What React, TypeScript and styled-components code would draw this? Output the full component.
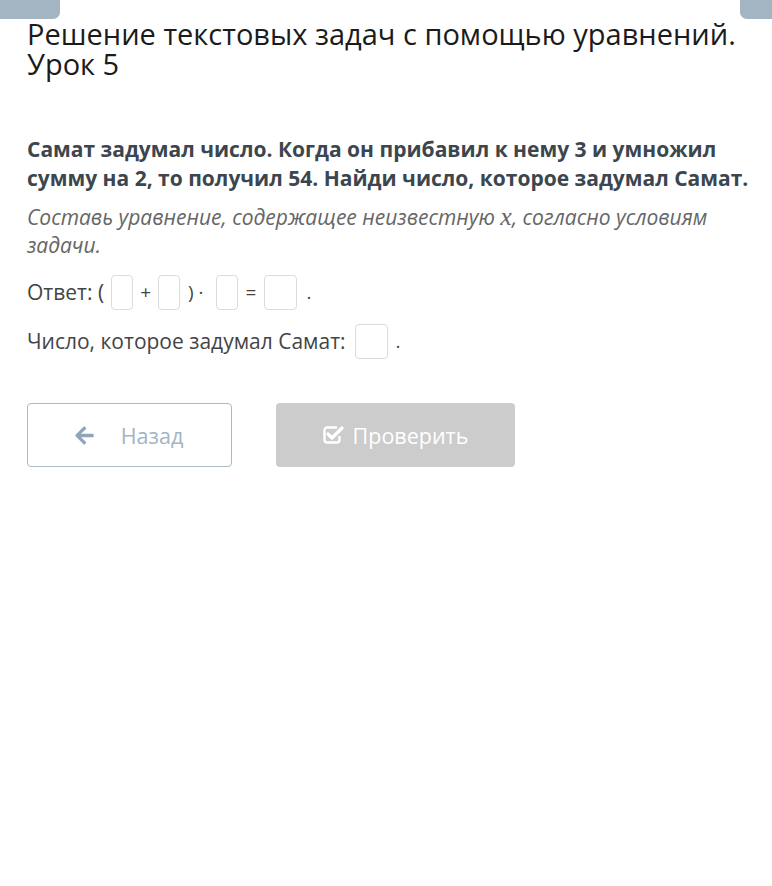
import React from "react";
import styled, { createGlobalStyle } from "styled-components";
import { FaArrowLeft } from "react-icons/fa";

const GlobalStyle = createGlobalStyle`
  html, body {
    margin: 0;
    padding: 0;
    background: #fff;
  }
  body {
    font-family: "Open Sans", "Liberation Sans", sans-serif;
  }
`;

const Page = styled.div`
  width: 772px;
  min-height: 886px;
  background: #fff;
`;

const TopBar = styled.div`
  display: flex;
  justify-content: space-between;
  height: 19px;
`;

const Tab = styled.div<{ $width: number; $side: "left" | "right" }>`
  width: ${(p) => p.$width}px;
  height: 19px;
  background: #a3b4c3;
  border-bottom-${(p) => (p.$side === "left" ? "right" : "left")}-radius: 7px;
`;

const Content = styled.div`
  padding: 0 6px 0 27px;
`;

const Title = styled.h1`
  margin: 0;
  font-size: 29px;
  line-height: 30px;
  font-weight: 400;
  color: #1b1b1b;
`;

const Question = styled.p`
  margin: 56px 0 0;
  font-size: 21px;
  line-height: 29px;
  font-weight: 700;
  color: #3c464e;
`;

const Hint = styled.p`
  margin: 10px 0 0;
  font-size: 21px;
  line-height: 28px;
  font-style: italic;
  color: #666;
`;

const Var = styled.span`
  font-family: "Liberation Serif", "DejaVu Serif", serif;
  font-style: italic;
  font-size: 26px;
  line-height: 0;
`;

const AnswerRow = styled.div<{ $top: number }>`
  display: flex;
  align-items: center;
  margin-top: ${(p) => p.$top}px;
  font-size: 21px;
  color: #444;
  height: 36px;
`;

const Sym = styled.span<{ $l?: number; $r?: number }>`
  margin: 0 ${(p) => p.$r ?? 7}px 0 ${(p) => p.$l ?? 7}px;
  font-size: 19px;
`;

const Box = styled.span<{ $w: number }>`
  display: inline-block;
  width: ${(p) => p.$w}px;
  height: 35px;
  box-sizing: border-box;
  border: 1px solid #dcdcdc;
  border-radius: 4px;
  background: #fff;
`;

const Buttons = styled.div`
  display: flex;
  gap: 44px;
  margin-top: 44px;
`;

const Button = styled.button<{ $variant: "back" | "check" }>`
  display: flex;
  align-items: center;
  justify-content: center;
  height: 64px;
  box-sizing: border-box;
  border-radius: 4px;
  font-family: inherit;
  font-size: 21.5px;
  padding: 0;
  ${(p) =>
    p.$variant === "back"
      ? `
    width: 205px;
    background: #fff;
    border: 1px solid #a8bcc8;
    color: #a3b4c3;
    gap: 26px;
    padding-right: 2px;
  `
      : `
    width: 239px;
    background: #cccccc;
    border: none;
    color: #fff;
    gap: 8px;
  `}
`;

function CheckSquare() {
  return (
    <svg width="22" height="20" viewBox="0 0 22 20">
      <path
        d="M14 2.5 H4 A2.5 2.5 0 0 0 1.5 5 V15 A2.5 2.5 0 0 0 4 17.5 H14 A2.5 2.5 0 0 0 16.5 15 V11"
        fill="none"
        stroke="#fff"
        strokeWidth="2.4"
      />
      <path
        d="M5 9 L9 13 L19 3"
        fill="none"
        stroke="#fff"
        strokeWidth="3.2"
        strokeLinecap="round"
        strokeLinejoin="round"
      />
    </svg>
  );
}

export default function App() {
  return (
    <Page>
      <GlobalStyle />
      <TopBar>
        <Tab $width={60} $side="left" />
        <Tab $width={32} $side="right" />
      </TopBar>
      <Content>
        <Title>
          Решение текстовых задач с помощью уравнений.
          <br />
          Урок 5
        </Title>
        <Question>
          Самат задумал число. Когда он прибавил к нему 3 и умножил
          <br />
          сумму на 2, то получил 54. Найди число, которое задумал Самат.
        </Question>
        <Hint>
          Составь уравнение, содержащее неизвестную <Var>x</Var>, согласно
          условиям задачи.
        </Hint>
        <AnswerRow $top={15}>
          <span>Ответ: (</span>
          <Sym $l={0} $r={7} />
          <Box $w={22} />
          <Sym>+</Sym>
          <Box $w={22} />
          <Sym $l={8} $r={12}>) ·</Sym>
          <Box $w={22} />
          <Sym $l={8} $r={8}>=</Sym>
          <Box $w={33} />
          <Sym $l={9}>.</Sym>
        </AnswerRow>
        <AnswerRow $top={13}>
          <span>Число, которое задумал Самат:</span>
          <Sym $l={0} $r={9} />
          <Box $w={33} />
          <Sym $l={8}>.</Sym>
        </AnswerRow>
        <Buttons>
          <Button $variant="back">
            <FaArrowLeft size={21} color="#8fa5b8" />
            Назад
          </Button>
          <Button $variant="check">
            <CheckSquare />
            Проверить
          </Button>
        </Buttons>
      </Content>
    </Page>
  );
}
